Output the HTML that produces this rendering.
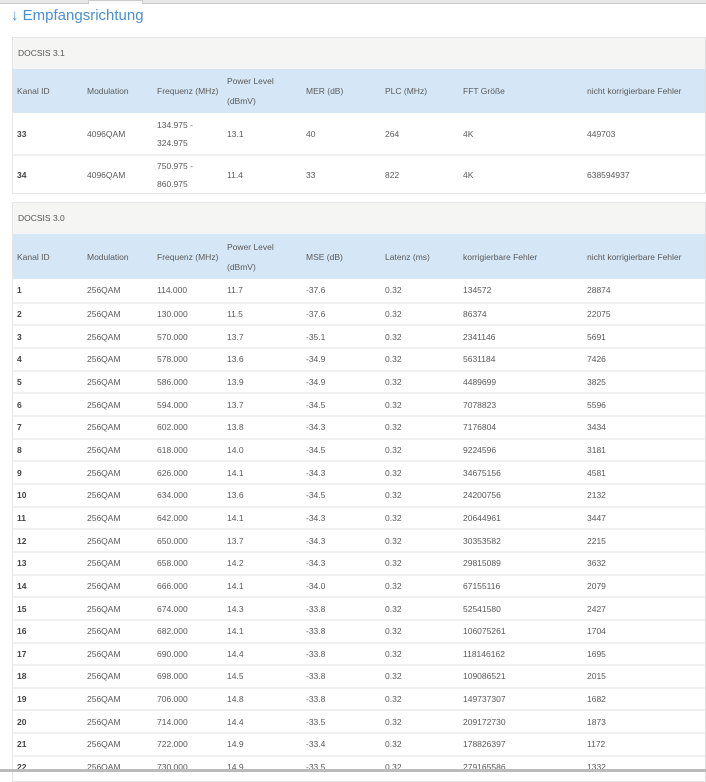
<!DOCTYPE html>
<html><head><meta charset="utf-8"><style>
*{margin:0;padding:0;box-sizing:border-box}
html,body{width:706px;height:772px;overflow:hidden;background:#fff;font-family:"Liberation Sans",sans-serif;color:#5a5a5a;font-size:8.5px}
.abs{position:absolute}
.tabs{position:absolute;left:0;top:0;width:706px;height:4px;border-bottom:1px solid #c8c8c8;background:#e8e8e8}
.title{position:absolute;left:11px;top:7px;font-size:15px;color:#4a8fd8}
.panel{position:absolute;left:12px;width:694px;border:1px solid #e6e6e6;border-right:1px solid #ddd}
.ph{background:#f5f5f3;height:31px;line-height:31px;padding-left:5px;font-size:8.5px;color:#555}
.th{background:#d5e7f6;position:relative}
.row{position:relative;border-top:2px solid #f0f0f0}
.c{position:absolute;top:0;height:100%;display:flex;align-items:center;line-height:18px}
.b{font-weight:bold;color:#444}
.bottom{position:absolute;left:0;top:769px;width:706px;height:3px;background:#bbb}
</style></head><body>
<div class="tabs"></div>
<div class="abs" style="left:88px;top:0;width:55px;height:4px;background:#fafafa;border:1px solid #ccc;border-bottom:none"></div>
<div class="title">↓ Empfangsrichtung</div>

<div class="panel" style="top:37px;height:157px">
<div class="ph">DOCSIS 3.1</div>
<div class="th" style="height:44px">
<div class="c" style="left:4px">Kanal ID</div><div class="c" style="left:74px">Modulation</div><div class="c" style="left:144px">Frequenz (MHz)</div><div class="c" style="left:214px;width:60px;line-height:20px">Power Level<br>(dBmV)</div><div class="c" style="left:293px">MER (dB)</div><div class="c" style="left:372px">PLC (MHz)</div><div class="c" style="left:450px">FFT Größe</div><div class="c" style="left:574px">nicht korrigierbare Fehler</div>
</div>
<div class="row" style="height:41px;border-top:none">
<div class="c b" style="left:4px">33</div><div class="c" style="left:74px">4096QAM</div><div class="c" style="left:144px">134.975 -<br>324.975</div><div class="c" style="left:214px">13.1</div><div class="c" style="left:293px">40</div><div class="c" style="left:372px">264</div><div class="c" style="left:450px">4K</div><div class="c" style="left:574px">449703</div>
</div>
<div class="row" style="height:40px">
<div class="c b" style="left:4px">34</div><div class="c" style="left:74px">4096QAM</div><div class="c" style="left:144px">750.975 -<br>860.975</div><div class="c" style="left:214px">11.4</div><div class="c" style="left:293px">33</div><div class="c" style="left:372px">822</div><div class="c" style="left:450px">4K</div><div class="c" style="left:574px">638594937</div>
</div>
</div>

<div class="panel" style="top:202px;height:580px">
<div class="ph">DOCSIS 3.0</div>
<div class="th" style="height:45px">
<div class="c" style="left:4px">Kanal ID</div><div class="c" style="left:74px">Modulation</div><div class="c" style="left:144px">Frequenz (MHz)</div><div class="c" style="left:214px;width:60px;line-height:20px">Power Level<br>(dBmV)</div><div class="c" style="left:293px">MSE (dB)</div><div class="c" style="left:372px">Latenz (ms)</div><div class="c" style="left:450px">korrigierbare Fehler</div><div class="c" style="left:574px">nicht korrigierbare Fehler</div>
</div>
<div id="rows"></div>
</div>
<div class="bottom"></div>
<script>
var d=[[1,"114.000","11.7","-37.6","134572","28874"],[2,"130.000","11.5","-37.6","86374","22075"],[3,"570.000","13.7","-35.1","2341146","5691"],[4,"578.000","13.6","-34.9","5631184","7426"],[5,"586.000","13.9","-34.9","4489699","3825"],[6,"594.000","13.7","-34.5","7078823","5596"],[7,"602.000","13.8","-34.3","7176804","3434"],[8,"618.000","14.0","-34.5","9224596","3181"],[9,"626.000","14.1","-34.3","34675156","4581"],[10,"634.000","13.6","-34.5","24200756","2132"],[11,"642.000","14.1","-34.3","20644961","3447"],[12,"650.000","13.7","-34.3","30353582","2215"],[13,"658.000","14.2","-34.3","29815089","3632"],[14,"666.000","14.1","-34.0","67155116","2079"],[15,"674.000","14.3","-33.8","52541580","2427"],[16,"682.000","14.1","-33.8","106075261","1704"],[17,"690.000","14.4","-33.8","118146162","1695"],[18,"698.000","14.5","-33.8","109086521","2015"],[19,"706.000","14.8","-33.8","149737307","1682"],[20,"714.000","14.4","-33.5","209172730","1873"],[21,"722.000","14.9","-33.4","178826397","1172"],[22,"730.000","14.9","-33.5","279165586","1332"]];
var h="";d.forEach(function(r,i){h+='<div class="row" style="height:22.67px;'+(i==0?'border-top:none':'')+'"><div class="c b" style="left:4px">'+r[0]+'</div><div class="c" style="left:74px">256QAM</div><div class="c" style="left:144px">'+r[1]+'</div><div class="c" style="left:214px">'+r[2]+'</div><div class="c" style="left:293px">'+r[3]+'</div><div class="c" style="left:372px">0.32</div><div class="c" style="left:450px">'+r[4]+'</div><div class="c" style="left:574px">'+r[5]+'</div></div>';});
document.getElementById("rows").innerHTML=h;
</script>
</body></html>
